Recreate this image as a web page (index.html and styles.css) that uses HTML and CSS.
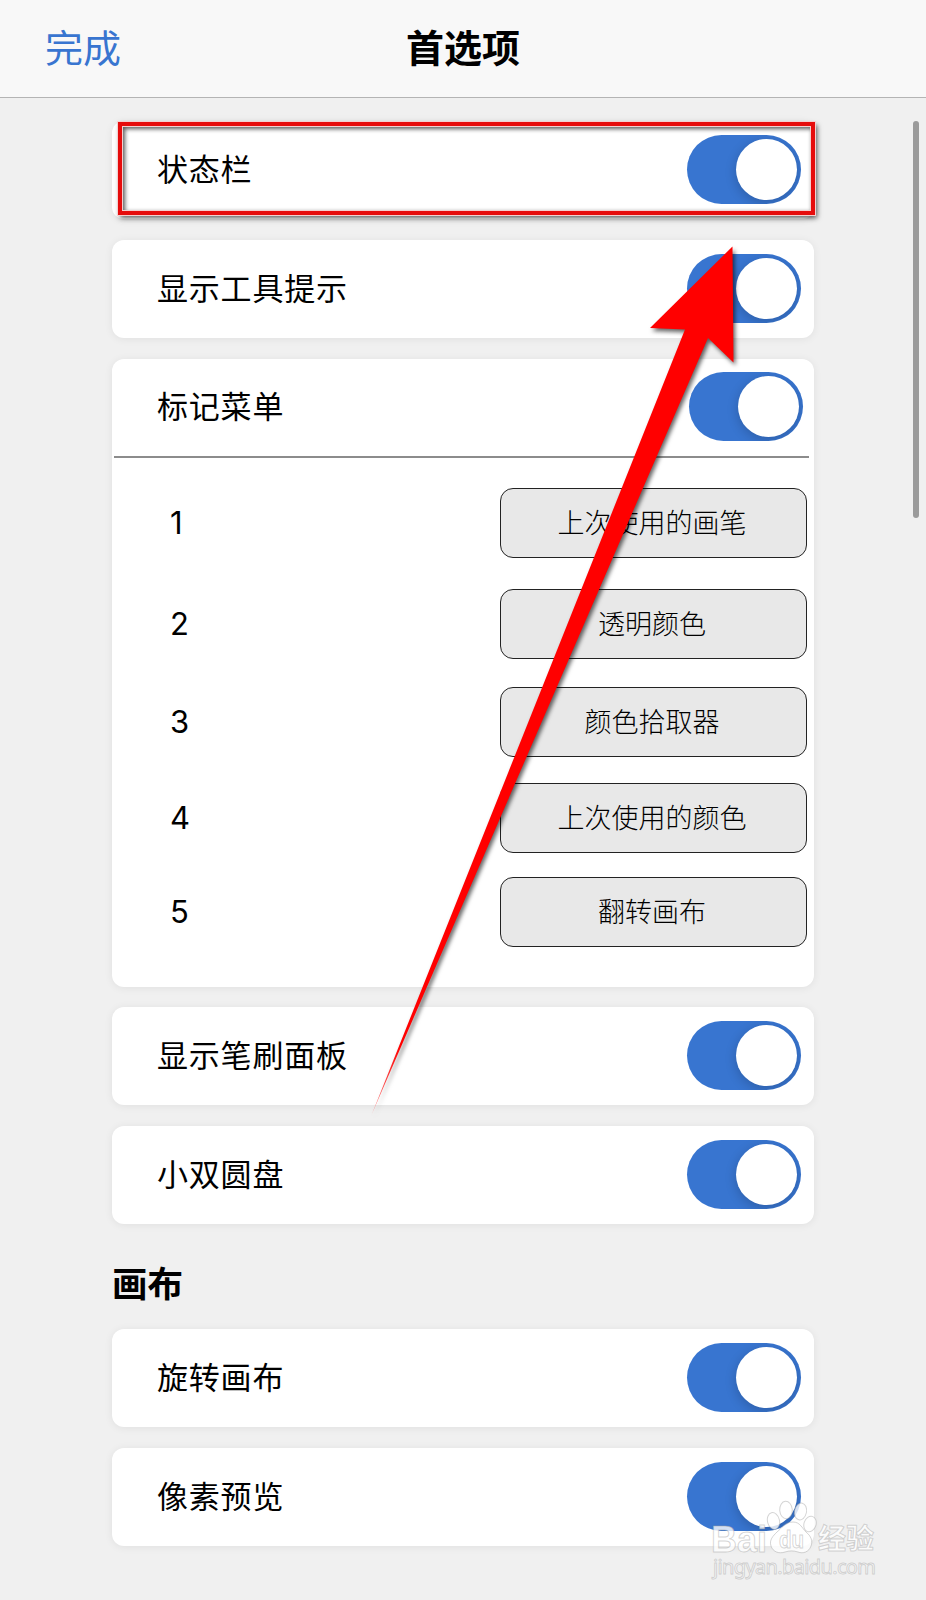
FILE: index.html
```html
<!DOCTYPE html>
<html lang="zh-CN">
<head>
    <meta charset="UTF-8">
    <meta name="viewport" content="width=device-width, initial-scale=1.0">
    <title>首选项</title>
    <link rel="stylesheet" href="styles.css">
</head>
<body>
    <header class="navbar">
        <a class="done">完成</a>
        <h1>首选项</h1>
    </header>

    <main class="settings">
        <div class="card row">
            <span class="label">状态栏</span>
            <span class="switch"></span>
            <div class="highlight"></div>
        </div>

        <div class="card row">
            <span class="label">显示工具提示</span>
            <span class="switch"></span>
        </div>

        <div class="card menu-card">
            <div class="row">
                <span class="label">标记菜单</span>
                <span class="switch"></span>
            </div>
            <div class="menu-list">
                <div class="menu-item"><span class="num">1</span><button>上次使用的画笔</button></div>
                <div class="menu-item"><span class="num">2</span><button>透明颜色</button></div>
                <div class="menu-item"><span class="num">3</span><button>颜色拾取器</button></div>
                <div class="menu-item"><span class="num">4</span><button>上次使用的颜色</button></div>
                <div class="menu-item"><span class="num">5</span><button>翻转画布</button></div>
            </div>
        </div>

        <div class="card row">
            <span class="label">显示笔刷面板</span>
            <span class="switch"></span>
        </div>

        <div class="card row">
            <span class="label">小双圆盘</span>
            <span class="switch"></span>
        </div>

        <h2>画布</h2>

        <div class="card row">
            <span class="label">旋转画布</span>
            <span class="switch"></span>
        </div>

        <div class="card row">
            <span class="label">像素预览</span>
            <span class="switch"></span>
        </div>
    </main>

    <div class="scrollbar"></div>

    <svg class="arrow" width="400" height="890" viewBox="360 240 400 890">
        <defs>
            <linearGradient id="tail" gradientUnits="userSpaceOnUse" x1="372" y1="1114" x2="400" y2="1046">
                <stop offset="0" stop-color="#f00" stop-opacity="0.45"/>
                <stop offset="1" stop-color="#f00"/>
            </linearGradient>
        </defs>
        <path fill="url(#tail)" d="M732.5 246.5 L650 328 L685 329.5 L371.500 1115 L708 338 L733.5 362.5 Z"/>
    </svg>

    <svg class="watermark" width="180" height="90" viewBox="705 1495 180 90">
        <g class="mark">
            <ellipse cx="786" cy="1510" rx="6.3" ry="8.7" transform="rotate(-4 786 1510)"/>
            <ellipse cx="800.5" cy="1511.5" rx="6" ry="8.5" transform="rotate(12 800.5 1511.5)"/>
            <ellipse cx="773.5" cy="1521" rx="6" ry="8.5" transform="rotate(-14 773.5 1521)"/>
            <ellipse cx="810" cy="1524" rx="6" ry="8" transform="rotate(18 810 1524)"/>
            <path d="M793 1522 c7 0 9 6 13 10 c5 4 7 9 5 14 c-2 6 -8 8 -13 6 c-5 -1.5 -8 -1.5 -13 0 c-6 2 -12 0 -14 -6 c-2 -6 2 -10 6 -14 c5 -4 8 -10 16 -10z"/>
            <text class="bai" x="711" y="1552" textLength="56" lengthAdjust="spacingAndGlyphs">Bai</text>
            <text class="du" x="779" y="1548" textLength="25" lengthAdjust="spacingAndGlyphs">du</text>
            <text class="jingyan" x="818" y="1549" textLength="56">经验</text>
            <text class="url" x="713" y="1574" textLength="163">jingyan.baidu.com</text>
        </g>
    </svg>
</body>
</html>
```
FILE: styles.css
```css
* {
    box-sizing: border-box;
}

body {
    margin: 0;
    position: relative;
    height: 1600px;
    overflow: hidden;
    background-color: #f0f0f0;
    color: #000;
    font-family: "Noto Sans CJK SC", sans-serif;
}

.navbar {
    display: grid;
    grid-template-columns: 1fr auto 1fr;
    align-items: center;
    height: 98px;
    padding: 0 45px 6px;
    background-color: #f8f8f8;
    border-bottom: 1px solid #b4b4b4;
}

.done {
    font-size: 38px;
    line-height: 1;
    color: #3875d0;
}

h1 {
    margin: 0;
    font-size: 38px;
    line-height: 1;
    font-weight: 700;
}

.settings {
    width: 702px;
    margin: 23px auto 0;
}

.card {
    position: relative;
    margin-bottom: 21px;
    background-color: #fff;
    border-radius: 12px;
    box-shadow: 0 1px 8px rgba(0, 0, 0, 0.07);
}

.row {
    display: flex;
    align-items: center;
    justify-content: space-between;
    height: 98px;
    padding: 0 13px 1px 45px;
}

.label {
    padding-bottom: 4px;
    font-size: 31px;
    letter-spacing: 0.8px;
    line-height: 1;
}

.switch {
    display: flex;
    justify-content: flex-end;
    width: 114px;
    height: 69px;
    padding: 4px;
    border-radius: 35px;
    background-color: #3875d0;
    overflow: hidden;
}

.switch::before {
    content: "";
    width: 61px;
    height: 61px;
    border-radius: 50%;
    background-color: #fff;
    box-shadow: 0 3px 12px rgba(0, 0, 0, 0.2);
}

.highlight {
    position: absolute;
    top: 1px;
    left: 6px;
    width: 697px;
    height: 93px;
    border: 4px solid #e60c0c;
    outline: 1px solid #f3d0d0;
    box-shadow: 2px 3px 5px rgba(0, 0, 0, 0.65), inset 0 0 0 1px #f3d0d0, inset 2px 2px 4px 1px rgba(0, 0, 0, 0.65);
}

.menu-card {
    height: 628px;
    margin-bottom: 20px;
}

.menu-card .row {
    height: 99px;
    margin: 0 5px 0 2px;
    padding: 0 6px 3px 43px;
    border-bottom: 2px solid #8c8c8c;
}

.menu-list {
    display: grid;
    grid-template-rows: 101px 98px 96px 94px 70px;
    padding: 30px 7px 0 58px;
}

.menu-item {
    display: flex;
    justify-content: space-between;
    height: 70px;
    align-items: center;
}

.num {
    padding-bottom: 2px;
    font-family: Inter, sans-serif;
    font-size: 31px;
}

.menu-item button {
    width: 307px;
    height: 70px;
    padding: 0 3px 4px 0;
    border: 1.5px solid #222;
    border-radius: 13px;
    background-color: #e8e8e8;
    color: #000;
    font-family: "Noto Sans CJK SC", sans-serif;
    font-size: 27px;
    font-weight: 300;
}

h2 {
    margin: 0;
    padding-bottom: 11px;
    font-size: 35.5px;
    line-height: 73px;
    font-weight: 700;
}

.scrollbar {
    position: absolute;
    top: 121px;
    right: 7px;
    width: 6px;
    height: 397px;
    border-radius: 3px;
    background-color: #9b9b9b;
}

.arrow {
    position: absolute;
    top: 240px;
    left: 360px;
    filter: drop-shadow(2px 3px 2px rgba(0, 0, 0, 0.6));
}

.watermark {
    position: absolute;
    top: 1495px;
    left: 705px;
}

.mark {
    fill: rgba(255, 255, 255, 0.8);
    stroke: rgba(160, 160, 160, 0.45);
    stroke-width: 1;
}

.bai {
    font: bold 36px "Liberation Sans", sans-serif;
}

.du {
    font: bold 23px "Liberation Sans", sans-serif;
}

.jingyan {
    font: bold 28px "Noto Sans CJK SC", sans-serif;
}

.url {
    font: 20px "Noto Sans", sans-serif;
}
```
